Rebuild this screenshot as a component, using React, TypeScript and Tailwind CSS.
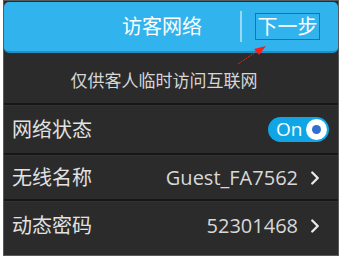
import React from 'react';
import { ChevronRight } from 'lucide-react';

const font = { fontFamily: '"Open Sans", "Noto Sans CJK SC", sans-serif' };

const Row: React.FC<{ label: string; children: React.ReactNode; h: string }> = ({ label, children, h }) => (
  <div className={`flex items-center justify-between pl-[8px] pr-[12px] ${h}`}>
    <span className="text-[20px] text-[#e2e2e2] leading-none">{label}</span>
    <div className="flex items-center">{children}</div>
  </div>
);

const Sep = () => <div className="h-[3px] border-t-2 border-[#161616] bg-[#333]" />;

export default function App() {
  return (
    <div className="w-[344px] h-[258px] bg-white" style={font}>
      <div className="relative ml-[3px] w-[336px] h-[256px] border border-[#5a5a5a] bg-[#2b2b2b] overflow-hidden">
        <div className="flex items-center h-[51px] mt-[1px] rounded-[5px] bg-[#31b4ee] border-b-2 border-[#1f8fc4]">
          <span className="pl-[118px] text-[20px] text-white leading-none">访客网络</span>
          <div className="ml-[38px] w-[2px] h-[31px] bg-[#9ad9f6]" />
          <div className="ml-[13px] flex items-center justify-center w-[65px] h-[27px] border-[1.5px] border-[#ff1a1a]">
            <span className="text-[20px] text-white leading-none">下一步</span>
          </div>
        </div>
        <div className="flex items-center justify-center h-[50px] pt-[5px] pr-[14px]">
          <span className="text-[17px] text-[#d6d6d6] leading-none">仅供客人临时访问互联网</span>
        </div>
        <Sep />
        <Row label="网络状态" h="h-[47px]">
          <div className="flex items-center w-[61px] h-[25px] rounded-full bg-[#10a6e6] pl-[8px] pr-[2px] justify-between -mr-[3px]">
            <span className="text-[19px] text-white leading-none">On</span>
            <div className="flex items-center justify-center w-[21px] h-[21px] rounded-full bg-white">
              <div className="w-[9px] h-[9px] rounded-full bg-[#2f6fd0]" />
            </div>
          </div>
        </Row>
        <Sep />
        <Row label="无线名称" h="h-[43px]">
          <span className="text-[20px] text-[#d8d8d8] leading-none">Guest_FA7562</span>
          <ChevronRight className="ml-[6px] w-[22px] h-[22px] text-[#e8e8e8]" strokeWidth={2.6} />
        </Row>
        <Sep />
        <Row label="动态密码" h="h-[48px]">
          <span className="text-[20px] text-[#d8d8d8] leading-none">52301468</span>
          <ChevronRight className="ml-[6px] w-[22px] h-[22px] text-[#e8e8e8]" strokeWidth={2.6} />
        </Row>
        <svg className="absolute left-[230px] top-[38px]" width="40" height="30" viewBox="0 0 40 30">
          <line x1="4" y1="25" x2="25" y2="11" stroke="#ff1a1a" strokeWidth="1" strokeDasharray="2 1" />
          <polygon points="32,7 20,10 25,16" fill="#ff1a1a" />
        </svg>
      </div>
    </div>
  );
}
